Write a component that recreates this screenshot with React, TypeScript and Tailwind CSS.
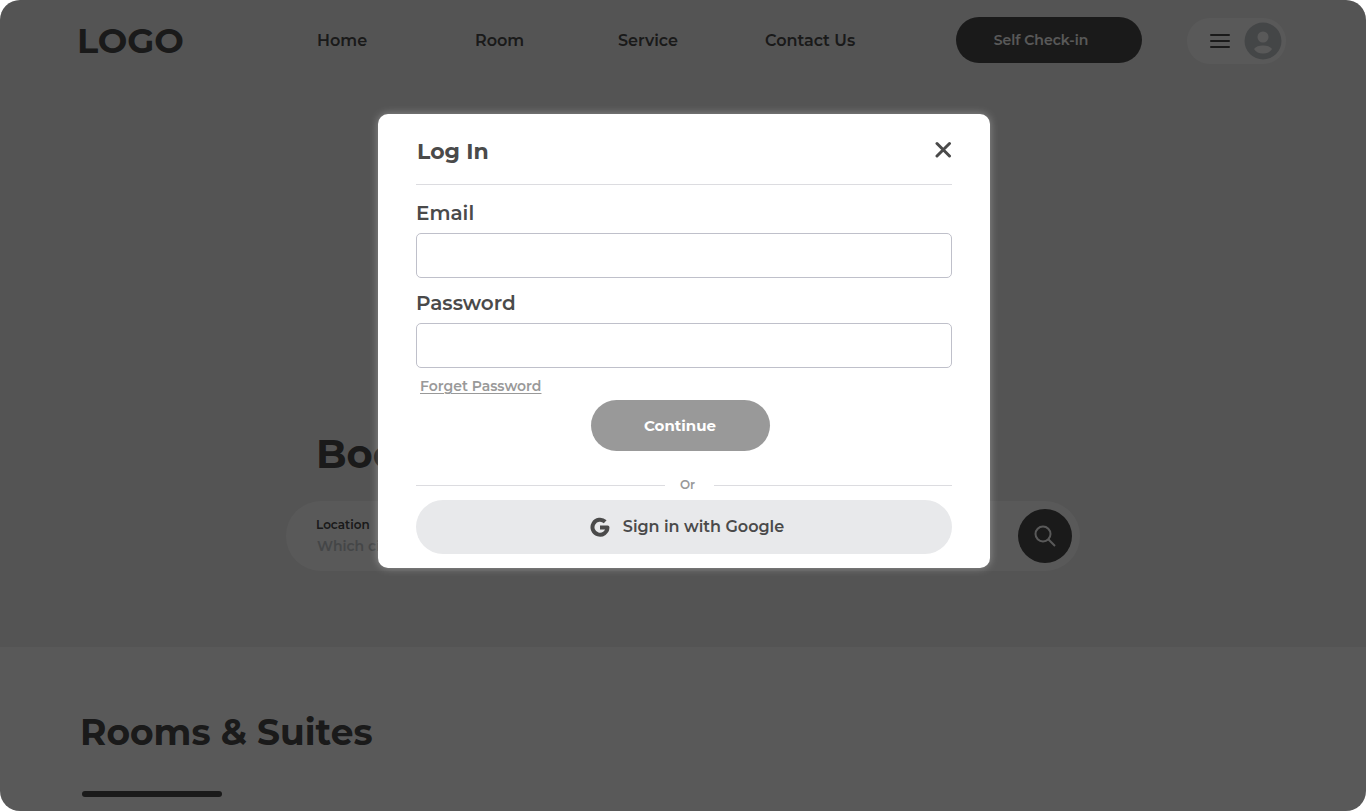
import React, { useState } from "react";

const navLinks = ["Home", "Room", "Service", "Contact Us"];

const GoogleIcon: React.FC = () => (
  <svg viewBox="0 0 20 20" className="size-5" fill="none" stroke="currentColor" strokeWidth="4" aria-hidden="true">
    <path d="M15.2 4.8A7.500 7.500 0 1 0 17.500 10.500H10" strokeLinejoin="round" />
  </svg>
);

const Header: React.FC = () => (
  <header className="flex items-center pt-4 pl-[77px] pr-20">
    <a href="#" className="w-60 pt-px text-[35px] leading-[46px] font-bold">LOGO</a>
    <nav className="grid grid-cols-[158px_143px_147px_1fr] grow pt-0.5 text-base font-semibold">
      {navLinks.map((link) => (
        <a key={link} href="#" className="whitespace-nowrap">{link}</a>
      ))}
    </nav>
    <button className="w-[186px] h-[46px] pr-4 rounded-full bg-[#4a4a4a] text-white text-sm font-semibold">
      Self Check-in
    </button>
    <button aria-label="Account menu" className="ml-[45px] mt-0.5 w-[99px] h-[46px] rounded-full bg-white flex items-center justify-end gap-[13px] pr-1">
      <svg viewBox="0 0 22 16" className="w-[22px] h-4" stroke="currentColor" strokeWidth="2" strokeLinecap="round">
        <path d="M2 2H20M2 8H20M2 14H20" />
      </svg>
      <svg viewBox="0 0 38 38" className="size-[38px]">
        <circle cx="19" cy="19" r="18.5" fill="#c4c8cc" />
        <circle cx="19" cy="15" r="5.5" fill="#fff" />
        <path d="M10 27C12 24.5 15 23.5 19 23.5S26 24.5 28 27C26 30 23 31.500 19 31.500S12 30 10 27Z" fill="#fff" />
      </svg>
    </button>
  </header>
);

const SearchBar: React.FC = () => (
  <form className="flex items-center justify-between h-[70px] rounded-full bg-white pl-[30px] pr-2">
    <div className="flex flex-col">
      <label htmlFor="location" className="text-xs leading-5 font-semibold">Location</label>
      <input id="location" placeholder="Which city do you prefer?" className="w-60 pl-px text-sm leading-[22px] font-semibold placeholder:text-[#c4c8cc] outline-none" />
    </div>
    <button type="button" aria-label="Search" className="size-[54px] rounded-full bg-[#4a4a4a] text-white flex items-center justify-center">
      <svg viewBox="0 0 22 22" className="size-[22px]" fill="none" stroke="currentColor" strokeWidth="2">
        <circle cx="9" cy="9" r="7.500" />
        <path d="M14.300 14.300L21 21" />
      </svg>
    </button>
  </form>
);

const LoginModal: React.FC<{ onClose: () => void }> = ({ onClose }) => {
  const [email, setEmail] = useState("");
  const [password, setPassword] = useState("");

  return (
    <div className="absolute inset-0 bg-black/65 flex justify-center items-start pt-[114px] pl-0.5">
      <div role="dialog" aria-labelledby="login-title" className="w-[612px] rounded-[10px] bg-white px-[38px] pb-[14px] shadow-[0_0_8px_rgba(255,255,255,0.35)]">
        <div className="flex items-center justify-between h-[71px] border-b border-[#dcdce0]">
          <h2 id="login-title" className="pt-1 pl-px text-[22px] font-bold">Log In</h2>
          <button onClick={onClose} aria-label="Close">
            <svg viewBox="0 0 18 18" className="size-[18px]" stroke="currentColor" strokeWidth="3" strokeLinecap="round">
              <path d="M3 3.500L15.500 16M15.500 3.500L3 16" />
            </svg>
          </button>
        </div>
        <form className="flex flex-col pt-3">
          <label htmlFor="email" className="text-xl leading-8 font-semibold">Email</label>
          <input id="email" type="email" value={email} onChange={(e) => setEmail(e.target.value)} className="mt-1 h-[45px] px-3 rounded-[5px] border border-[#bfc0ca]" />
          <label htmlFor="password" className="mt-[9px] text-xl leading-8 font-semibold">Password</label>
          <input id="password" type="password" value={password} onChange={(e) => setPassword(e.target.value)} className="mt-1 h-[45px] px-3 rounded-[5px] border border-[#bfc0ca]" />
          <a href="#" className="self-start ml-1 mt-2 text-sm leading-5 font-semibold text-[#999] underline underline-offset-2">Forget Password</a>
          <button type="button" className="self-center mt-1 mr-2 w-[179px] h-[51px] pt-px rounded-full bg-[#999] text-white text-[15px] font-bold">
            Continue
          </button>
        </form>
        <div className="mt-6 flex items-center text-xs leading-5 font-semibold text-[#999]">
          <hr className="grow border-[#dcdce0]" />
          <span className="w-[49px] pl-[15px]">Or</span>
          <hr className="w-[238px] border-[#dcdce0]" />
        </div>
        <button className="mt-[5px] w-full h-[54px] pl-1.5 rounded-full bg-[#e8e9eb] flex items-center justify-center gap-[13px] text-base font-semibold">
          <GoogleIcon />
          Sign in with Google
        </button>
      </div>
    </div>
  );
};

const App: React.FC = () => {
  const [showLogin, setShowLogin] = useState(true);

  return (
    <div className="relative min-h-screen rounded-[20px] overflow-hidden bg-white text-[#4a4a4a] font-[Montserrat,Inter,sans-serif]">
      <section className="bg-[#f0f0f0] pb-[76px]">
        <Header />
        <div className="w-[794px] mx-auto pt-[360px]">
          <h1 className="ml-[30px] mb-[17px] text-[40px] leading-[60px] font-bold">Book a Room</h1>
          <SearchBar />
        </div>
      </section>
      <section className="px-20 pt-[60px] pb-[14px]">
        <h2 className="text-[36px] leading-[50px] font-bold">Rooms &amp; Suites</h2>
        <div className="mt-[34px] ml-0.5 w-[140px] h-1.5 rounded-full bg-[#4a4a4a]" />
      </section>
      {showLogin && <LoginModal onClose={() => setShowLogin(false)} />}
    </div>
  );
};

export default App;
